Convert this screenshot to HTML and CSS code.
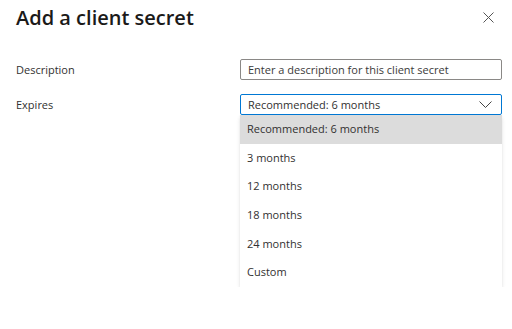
FILE: index.html
```html
<!DOCTYPE html>
<html lang="en">
<head>
	<meta charset="utf-8">
	<title>Add a client secret</title>
	<link rel="stylesheet" href="styles.css">
</head>
<body>
	<header class="head">
		<h1>Add a client secret</h1>
		<button class="close" aria-label="Close">
			<svg width="11" height="11" viewBox="0 0 11 11"><path d="M0.5 0.5 L10.5 10.5 M10.5 0.5 L0.5 10.5" stroke="#555" stroke-width="1" fill="none"/></svg>
		</button>
	</header>

	<div class="row first">
		<label>Description</label>
		<div class="field">
			<input class="text" type="text" placeholder="Enter a description for this client secret">
		</div>
	</div>

	<div class="row">
		<label>Expires</label>
		<div class="field">
			<div class="select">
				<span>Recommended: 6 months</span>
				<svg width="13" height="8" viewBox="0 0 13 8"><path d="M0.5 0.5 L6.5 6.5 L12.5 0.5" stroke="#444" stroke-width="1" fill="none"/></svg>
			</div>
			<ul class="menu">
				<li class="sel">Recommended: 6 months</li>
				<li>3 months</li>
				<li>12 months</li>
				<li>18 months</li>
				<li>24 months</li>
				<li>Custom</li>
			</ul>
		</div>
	</div>
</body>
</html>
```

FILE: styles.css
```css
body {
	margin:0;
	font-family:"Open Sans", "Noto Sans", sans-serif;
	font-size:11px;
	color:#323130;
	background:#fff;
}

.head {
	display:flex;
	justify-content:space-between;
	align-items:center;
	padding:1px 18px 0 16px;
	height:33px;
}

h1 {
	margin:0;
	font-size:20px;
	font-weight:600;
	color:#1b1a19;
}

.close {
	border:none;
	background:none;
	padding:0;
	display:flex;
}

.row {
	display:flex;
	align-items:flex-start;
	padding:0 10px 0 16px;
}

.row.first {
	margin-top:25px;
}

.row + .row {
	margin-top:14px;
}

label {
	width:224px;
	line-height:21px;
}

.field {
	flex:1;
}

input.text {
	box-sizing:border-box;
	width:100%;
	height:21px;
	border:1px solid #8a8886;
	border-radius:2px;
	padding:0 7px;
	font:inherit;
	color:#323130;
}

input.text::placeholder {
	color:#3b3a39;
}

.select {
	box-sizing:border-box;
	height:21px;
	border:1px solid #0078d4;
	border-radius:2px;
	padding:0 9px 0 7px;
	display:flex;
	justify-content:space-between;
	align-items:center;
}

.menu {
	list-style:none;
	margin:0;
	padding:0;
	box-shadow:0 1.6px 3.6px rgba(0,0,0,0.13), 0 0.3px 0.9px rgba(0,0,0,0.11);
}

.menu li {
	height:28.7px;
	line-height:28.7px;
	padding:0 7px;
}

.menu li.sel {
	background:#dcdcdc;
}
```
